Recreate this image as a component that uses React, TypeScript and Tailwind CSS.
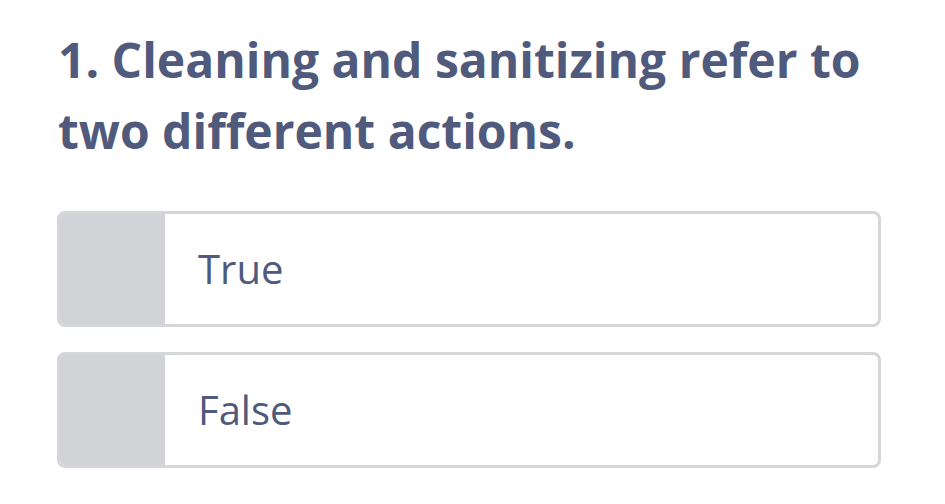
const OPTIONS = ["True", "False"];

export default function App() {
  return (
    <div className="min-h-screen bg-white pl-[57px] pr-[40px] pt-[24px]" style={{ fontFamily: '"Open Sans", sans-serif' }}>
      <h1 className="text-[48px] leading-[71px] font-bold text-[#4f5a7c] pl-[1px]">
        1. Cleaning and sanitizing refer to
        <br />
        two different actions.
      </h1>

      <div className="mt-[45px] flex flex-col gap-[25px] w-[824px]">
        {OPTIONS.map((opt) => (
          <button
            key={opt}
            className="flex h-[116px] w-full overflow-hidden rounded-[8px] border-[3px] border-[#d5d6d9] bg-white text-left"
          >
            <div className="w-[105px] shrink-0 bg-[#d2d3d6]" />
            <div className="flex flex-1 items-center pl-[33px] text-[40px] text-[#4f5a7c]">{opt}</div>
          </button>
        ))}
      </div>
    </div>
  );
}
